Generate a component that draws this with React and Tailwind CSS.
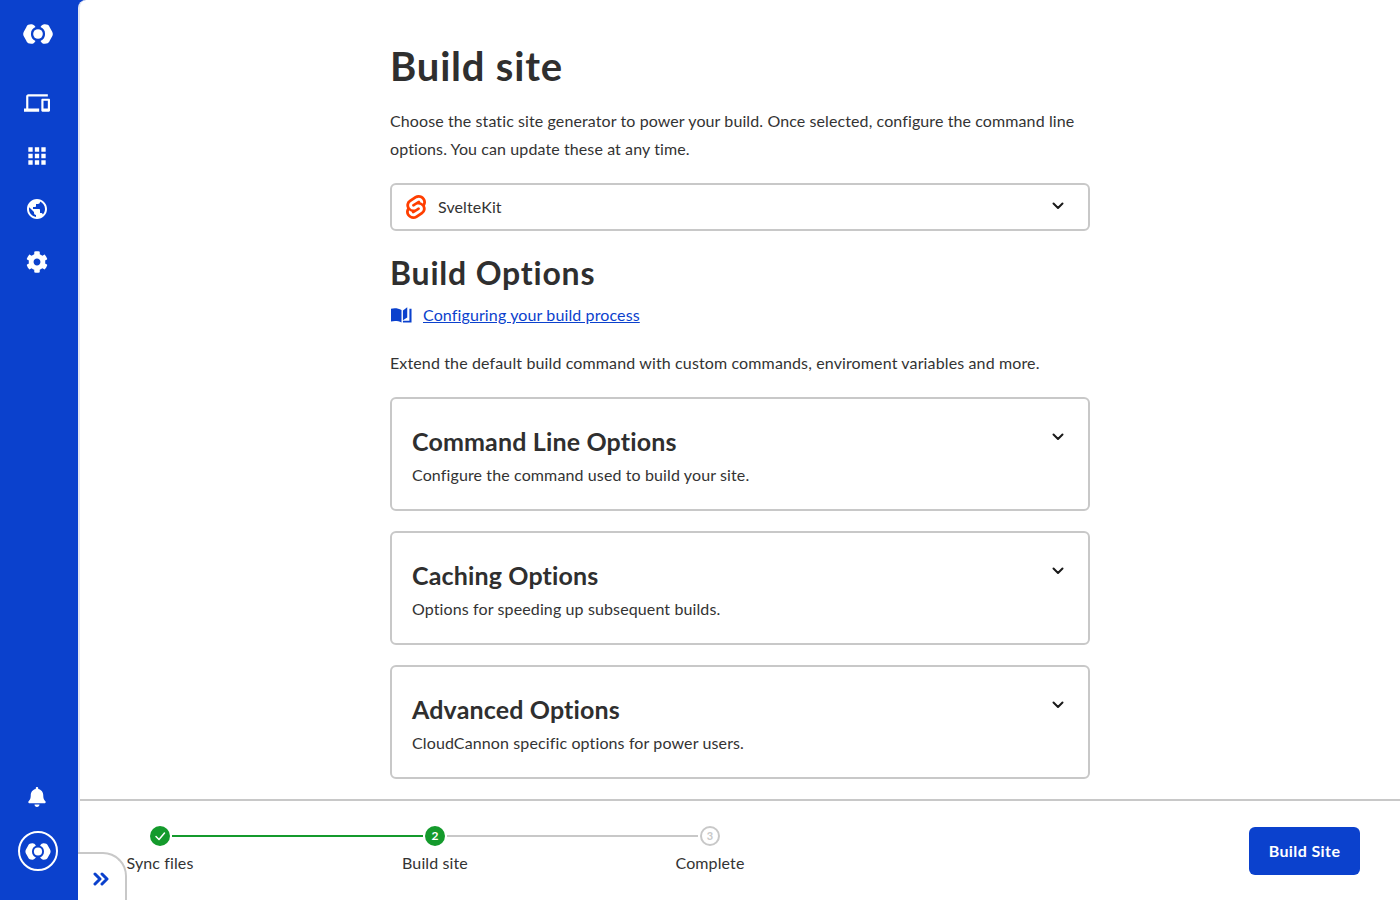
import React from "react";
import { MdDevices, MdApps, MdPublic } from "react-icons/md";
import { FaCog, FaBell } from "react-icons/fa";
import { SiSvelte } from "react-icons/si";

const font = { fontFamily: '"Lato", "Noto Sans", sans-serif' };

const bracket = "M7 .6C9 -.2 11 .4 12.500 3.100A7.500 7.500 0 0 0 12.500 16.900C11 19.600 9 20.200 7 19.400C5 19.700 3.800 18.300 3.300 16.800L.8 12.300C0 10.800 0 9.200 .8 7.700L3.300 3.200C3.800 1.700 5 .3 7 .6Z";

// CloudCannon mark: two brackets round a dot
const Logo = ({ className }) => (
  <svg viewBox="0 0 30 20" className={className} fill="white">
    <path d={bracket} />
    <path d={bracket} transform="matrix(-1 0 0 1 30 0)" />
    <circle cx="15" cy="10" r="4.800" />
  </svg>
);

const Chevron = () => (
  <svg viewBox="0 0 12 8" className="w-3 h-2 shrink-0" fill="none" stroke="#1a1a1a" strokeWidth="2" strokeLinecap="round" strokeLinejoin="round">
    <path d="M1.500 1.500 6 6l4.500-4.500" />
  </svg>
);

const Book = () => (
  <svg viewBox="0 0 22 16" className="ml-[1px] w-[21px] h-4 shrink-0" fill="#0b41cd">
    <path d="M0 1.500C3.500 .5 7.500 .8 11 2.800V15.800C7.500 14 3.500 13.800 0 14.800Z" />
    <path d="M12.500 3.200 17 0V10.500L12.500 13.500Z" />
    <path d="M19.300 1.500H21.500V15.800H12.500V14H19.300Z" />
  </svg>
);

const Card = ({ title, desc }) => (
  <div className="border-2 border-[#c8c8c8] rounded-md h-[114px] pl-[20px] pr-[24px] flex justify-between">
    <div className="pt-[25px]">
      <h3 className="text-[25px] leading-[34px] font-bold tracking-[0.15px] text-[#2f2f2f]">{title}</h3>
      <p className="mt-[3px] text-[16px] leading-[28px] text-[#333]">{desc}</p>
    </div>
    <div className="pt-[34px]">
      <Chevron />
    </div>
  </div>
);

const Step = ({ label, children }) => (
  <div className="w-5 flex flex-col items-center">
    {children}
    <span className="mt-[5px] whitespace-nowrap text-[16px] leading-[24px] text-[#333]">{label}</span>
  </div>
);

const App = () => {
  return (
    <div style={font} className="relative h-screen w-full flex overflow-hidden bg-[#0b41cd] tracking-[0.12px] [font-variant-ligatures:none]">
      {/* Sidebar */}
      <aside className="w-[78px] shrink-0 flex flex-col items-center pt-[24px] pb-[29px] pr-[2px] text-white">
        <Logo className="w-[30px] h-5" />
        <nav className="mt-[32px] -ml-[2px] flex flex-col items-center">
          <span className="h-[53px] flex items-center"><MdDevices size={26} /></span>
          <span className="h-[53px] flex items-center"><MdApps size={26} /></span>
          <span className="h-[53px] flex items-center"><MdPublic size={24} /></span>
          <span className="h-[53px] flex items-center"><FaCog size={22} /></span>
        </nav>
        <FaBell size={20} className="mt-auto -ml-[2px]" />
        <div className="mt-[24px] w-10 h-10 rounded-full border-2 border-white flex items-center justify-center">
          <Logo className="w-[26px] h-[17px]" />
        </div>
      </aside>

      {/* Main panel */}
      <main className="flex-1 min-w-0 flex flex-col bg-white rounded-tl-lg border-l-2 border-[#e4e7f2]">
        <section className="flex-1 min-h-0 flex justify-center">
          <div className="w-[700px] pt-[38px]">
            <h1 className="text-[40px] leading-[56px] font-bold tracking-[0.8px] text-[#2f2f2f]">Build site</h1>
            <p className="mt-[13px] text-[16px] leading-[28px] tracking-[0.1px] text-[#333]">
              Choose the static site generator to power your build. Once selected, configure the command line options. You can update these at any time.
            </p>
            <div className="mt-[20px] h-12 border-2 border-[#c8c8c8] rounded-md pl-[12px] pr-[24px] flex items-center">
              <SiSvelte size={24} className="text-[#ff3e00]" />
              <span className="ml-[10px] text-[16px] text-[#333]">SvelteKit</span>
              <span className="ml-auto -mt-[3px]"><Chevron /></span>
            </div>
            <h2 className="mt-[20px] text-[32px] leading-[44px] font-bold tracking-[0.8px] text-[#2f2f2f]">Build Options</h2>
            <div className="mt-[6px] flex items-center">
              <Book />
              <a href="#" className="ml-[11px] text-[16px] leading-[28px] text-[#0b41cd] underline">Configuring your build process</a>
            </div>
            <p className="mt-[20px] text-[16px] leading-[28px] tracking-[0.13px] text-[#333]">
              Extend the default build command with custom commands, enviroment variables and more.
            </p>
            <div className="mt-[20px] flex flex-col gap-5">
              <Card title="Command Line Options" desc="Configure the command used to build your site." />
              <Card title="Caching Options" desc="Options for speeding up subsequent builds." />
              <Card title="Advanced Options" desc="CloudCannon specific options for power users." />
            </div>
          </div>
        </section>

        {/* Footer with steps */}
        <footer className="h-[101px] shrink-0 border-t-2 border-[#c8c8c8] pl-[70px] pr-10 flex justify-between">
          <div className="pt-[25px] flex items-start">
            <Step label="Sync files">
              <span className="w-5 h-5 rounded-full bg-[#149a2c] flex items-center justify-center">
                <svg viewBox="0 0 12 12" className="w-3 h-3" fill="none" stroke="white" strokeWidth="1.500" strokeLinecap="round" strokeLinejoin="round">
                  <path d="M2 6.500 5 9.500 10.500 3" />
                </svg>
              </span>
            </Step>
            <div className="mt-[9px] mx-[2px] w-[251px] h-[2px] bg-[#149a2c]" />
            <Step label="Build site">
              <span className="w-5 h-5 rounded-full bg-[#149a2c] flex items-center justify-center text-white text-[12px] font-bold">2</span>
            </Step>
            <div className="mt-[9px] mx-[2px] w-[251px] h-[2px] bg-[#c8c8c8]" />
            <Step label="Complete">
              <span className="w-5 h-5 rounded-full border-2 border-[#c8c8c8] flex items-center justify-center text-[#c8c8c8] text-[11px] font-bold">3</span>
            </Step>
          </div>
          <div className="pt-[26px]">
            <button className="w-[111px] h-12 rounded-md bg-[#0b41cd] text-white text-[16px] font-bold tracking-[0.4px]">Build Site</button>
          </div>
        </footer>
      </main>

      {/* Sidebar collapse tab */}
      <button className="absolute left-[78px] bottom-0 w-[49px] h-[48px] bg-white border-t-2 border-r-2 border-[#c8c8c8] rounded-tr-[24px] flex items-center justify-center pt-[4px] pr-[2px]">
        <svg viewBox="0 0 16 14" className="w-4 h-[14px]" fill="none" stroke="#0b41cd" strokeWidth="3" strokeLinecap="round" strokeLinejoin="round">
          <path d="M2 2l5 5-5 5M9 2l5 5-5 5" />
        </svg>
      </button>
    </div>
  );
};

export default App;
